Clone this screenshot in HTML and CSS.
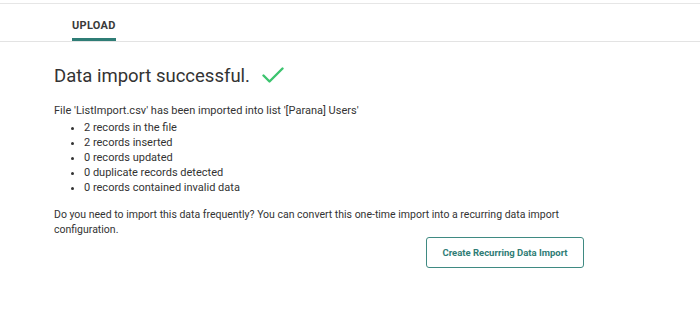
FILE: index.html
```html
<!DOCTYPE html>
<html lang="en">
<head>
    <meta charset="UTF-8">
    <title>Data Import</title>
    <link rel="stylesheet" href="styles.css">
</head>
<body>
    <nav class="tabs">
        <a class="tab active" href="#">UPLOAD</a>
    </nav>

    <main class="result">
        <h1 class="result-title">
            Data import successful.
            <svg class="check" width="22" height="17" viewBox="0 0 22 17">
                <path d="M1.5 8.5 L7.5 14.5 L20.5 1.5" fill="none" stroke="#3cc46f" stroke-width="2.4" stroke-linecap="round" stroke-linejoin="round"/>
            </svg>
        </h1>
        <p class="summary">File 'ListImport.csv' has been imported into list '[Parana] Users'</p>
        <ul class="stats">
            <li>2 records in the file</li>
            <li>2 records inserted</li>
            <li>0 records updated</li>
            <li>0 duplicate records detected</li>
            <li>0 records contained invalid data</li>
        </ul>
        <p class="hint">Do you need to import this data frequently? You can convert this one-time import into a recurring data import configuration.</p>
        <div class="actions">
            <button class="btn-outline">Create Recurring Data Import</button>
        </div>
    </main>
</body>
</html>
```

FILE: styles.css
```css
body {
    margin: 0;
    padding-top: 3px;
    font-family: Roboto, "Liberation Sans", Arial, sans-serif;
    color: #333;
    background: #fff;
}
.tabs {
    display: flex;
    height: 37px;
    padding-left: 72px;
    border-top: 1px solid #e6e6e6;
    border-bottom: 1px solid #e3e3e3;
}
.tab {
    display: flex;
    align-items: center;
    padding-top: 8px;
    font-size: 11px;
    font-weight: 700;
    letter-spacing: 0.3px;
    color: #3a3a3a;
    text-decoration: none;
    border-bottom: 3px solid transparent;
}
.tab.active {
    border-bottom-color: #2f7d76;
}
.result {
    width: 530px;
    padding: 20px 0 0 54px;
}
.result-title {
    display: flex;
    align-items: center;
    gap: 12px;
    margin: 0;
    font-size: 18.5px;
    font-weight: 400;
    line-height: 28px;
    color: #333;
}
.check {
    margin-top: -2px;
}
.summary {
    margin: 13px 0 0;
    font-size: 11px;
    line-height: 15px;
}
.stats {
    margin: 2px 0 0;
    padding-left: 30px;
    font-size: 11px;
    line-height: 15px;
}
.hint {
    margin: 12px 0 0;
    font-size: 10.5px;
    line-height: 15px;
}
.actions {
    display: flex;
    justify-content: flex-end;
    margin-top: 0;
}
.btn-outline {
    width: 158px;
    height: 31px;
    border: 1px solid #3f8a82;
    border-radius: 3px;
    background: #fff;
    color: #2f7d76;
    font-family: inherit;
    font-size: 9.5px;
    font-weight: 700;
}
```
